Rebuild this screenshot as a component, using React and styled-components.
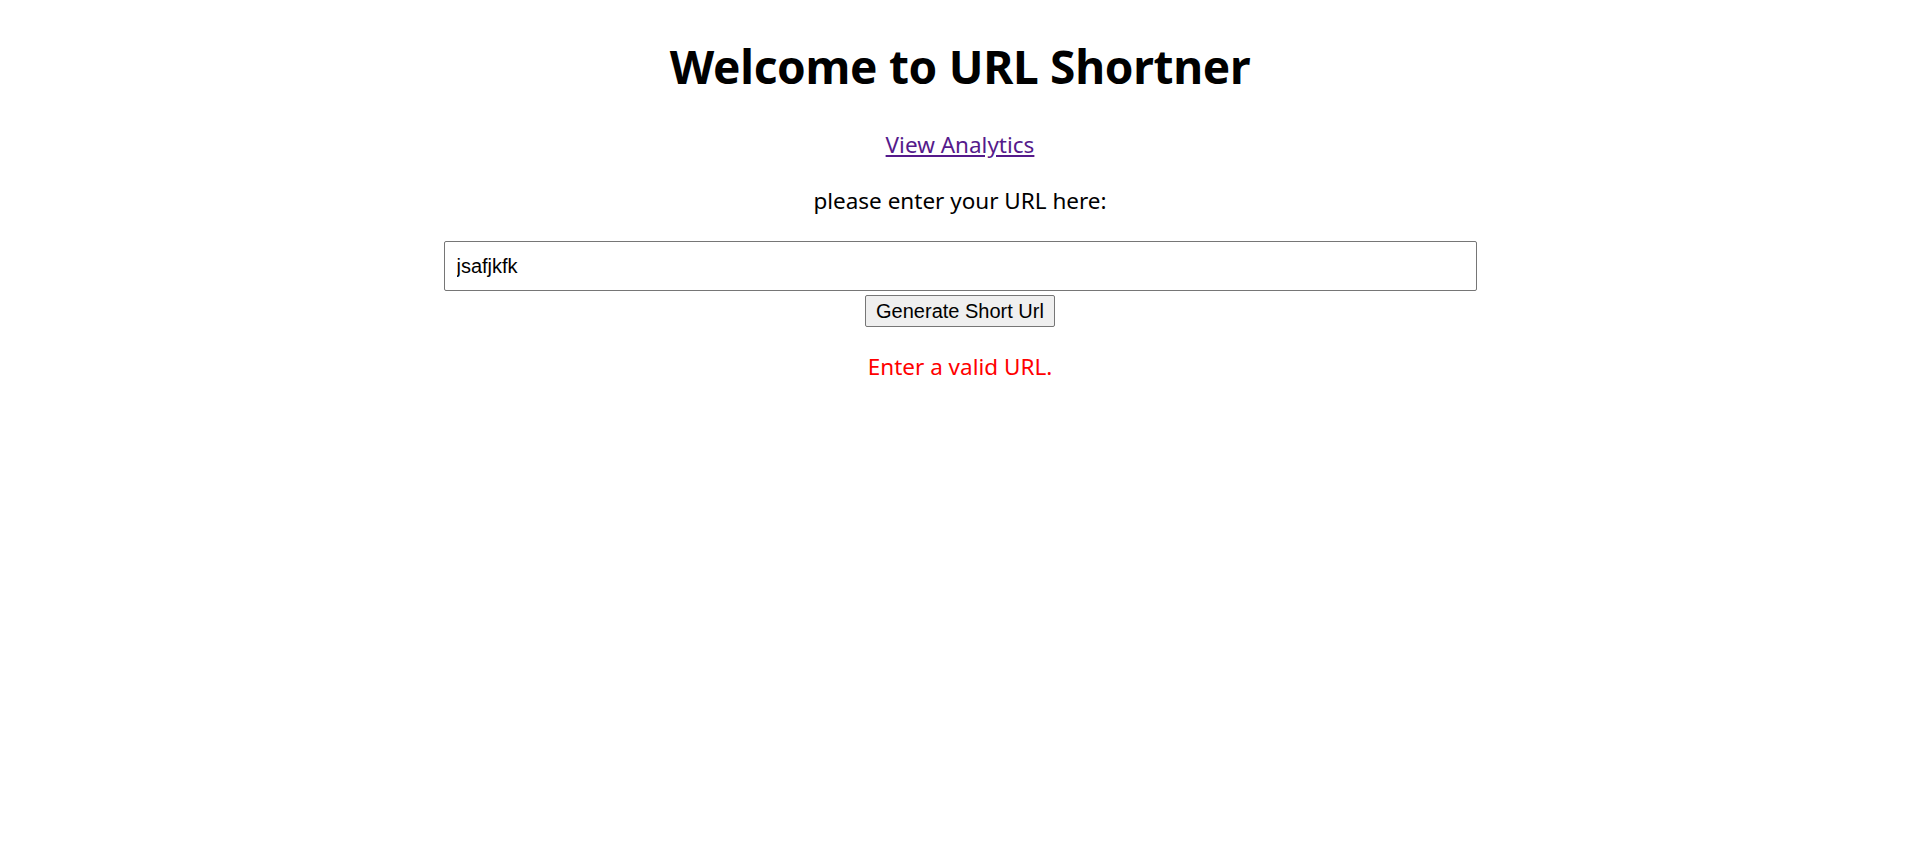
import styled, { createGlobalStyle } from 'styled-components';

const GlobalStyle = createGlobalStyle`
	body {
		margin: 0;
		background: #fff;
		font-family: 'Noto Sans', 'Open Sans', sans-serif;
	}
`;

const Page = styled.div`
	display: flex;
	flex-direction: column;
	align-items: center;
	padding-top: 34px;
	text-align: center;
`;

const Title = styled.h1`
	margin: 0;
	font-size: 46px;
	font-weight: 700;
	line-height: 64px;
	color: #000;
	letter-spacing: -0.3px;
`;

const AnalyticsLink = styled.a`
	margin-top: 32px;
	font-size: 22.5px;
	line-height: 30px;
	color: #551a8b;
	text-decoration: underline;
`;

const Label = styled.p`
	margin: 26px 0 0;
	font-size: 22.5px;
	line-height: 30px;
	color: #000;
`;

const Form = styled.form`
	display: flex;
	flex-direction: column;
	align-items: center;
	margin-top: 25px;
`;

const UrlInput = styled.input`
	box-sizing: border-box;
	width: 1033px;
	height: 50px;
	padding: 0 12px;
	border: 1px solid #767676;
	border-radius: 2px;
	font-family: 'Liberation Sans', Arial, sans-serif;
	font-size: 20px;
	color: #000;
	outline: none;
`;

const SubmitBtn = styled.button`
	box-sizing: border-box;
	margin-top: 4px;
	height: 32px;
	padding: 0 10px;
	border: 1px solid #767676;
	border-radius: 2px;
	background: #efefef;
	font-family: 'Liberation Sans', Arial, sans-serif;
	font-size: 20px;
	color: #000;
`;

const ErrorText = styled.p`
	margin: 25px 0 0;
	font-size: 22.5px;
	line-height: 30px;
	color: #ff0000;
`;

function App() {
	return (
		<>
			<GlobalStyle />
			<Page>
				<Title>Welcome to URL Shortner</Title>
				<AnalyticsLink href="#analytics">View Analytics</AnalyticsLink>
				<Label>please enter your URL here:</Label>
				<Form onSubmit={(e) => e.preventDefault()}>
					<UrlInput type="text" defaultValue="jsafjkfk" />
					<SubmitBtn type="submit">Generate Short Url</SubmitBtn>
				</Form>
				<ErrorText>Enter a valid URL.</ErrorText>
			</Page>
		</>
	);
}

export default App;
